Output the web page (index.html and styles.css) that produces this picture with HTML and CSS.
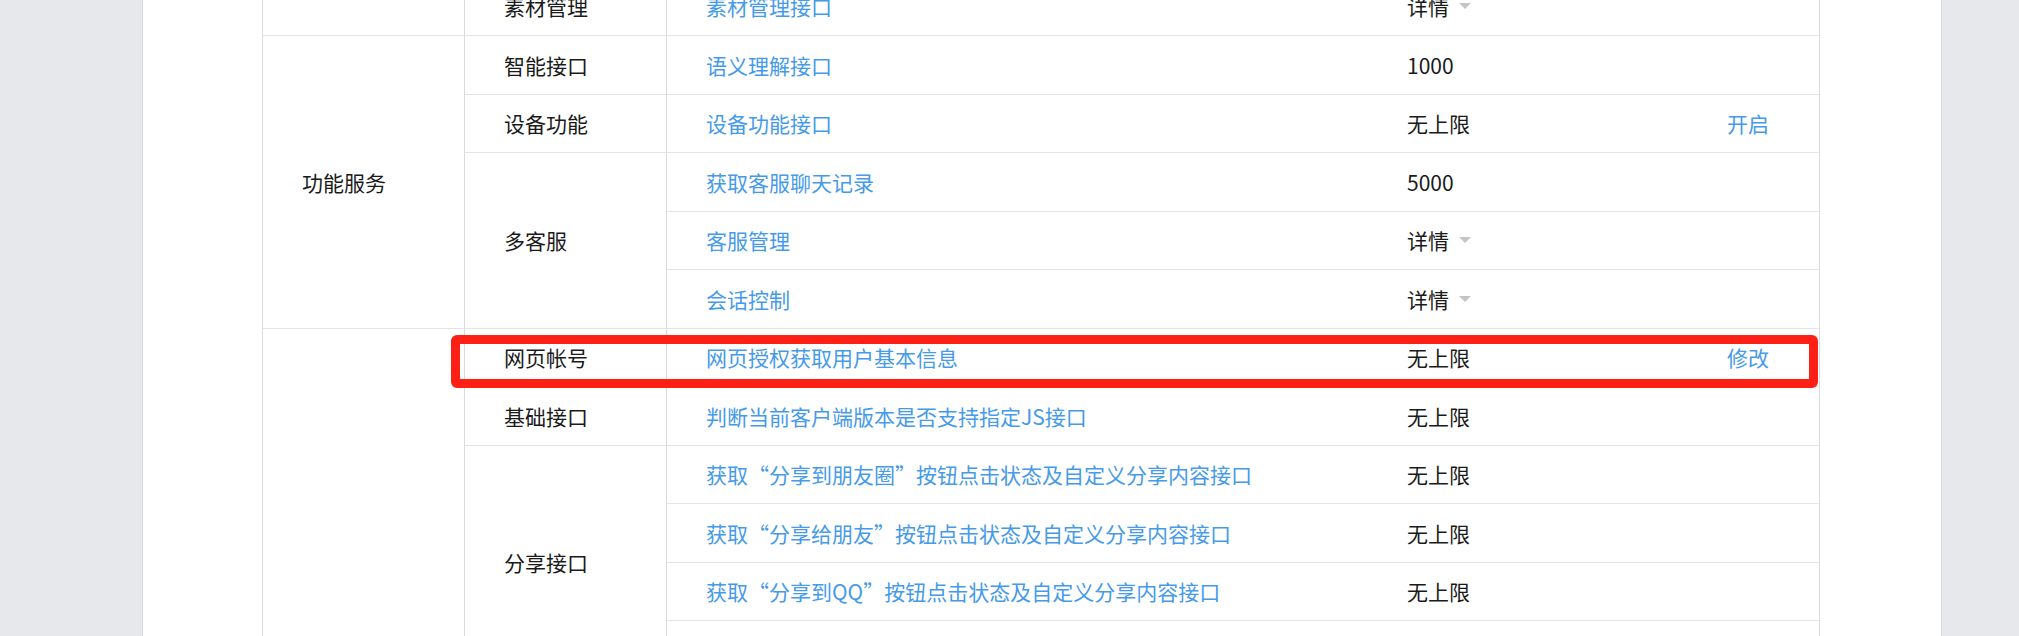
FILE: index.html
```html
<!DOCTYPE html>
<html lang="zh-CN">
<head>
<meta charset="utf-8">
<title>接口权限</title>
<link rel="stylesheet" href="styles.css">
</head>
<body>
<div class="page">
  <div class="grid">
    <!-- 素材管理 (section above, scrolled) -->
    <div class="cell c1"></div>
    <div class="cell c2">素材管理</div>
    <div class="cell c3 link">素材管理接口</div>
    <div class="cell c4">详情<span class="caret"></span></div>
    <div class="cell c5"></div>

    <!-- 功能服务 -->
    <div class="cell c1 span5">功能服务</div>
    <div class="cell c2">智能接口</div>
    <div class="cell c3 link">语义理解接口</div>
    <div class="cell c4">1000</div>
    <div class="cell c5"></div>

    <div class="cell c2">设备功能</div>
    <div class="cell c3 link">设备功能接口</div>
    <div class="cell c4">无上限</div>
    <div class="cell c5 link">开启</div>

    <div class="cell c2 span3">多客服</div>
    <div class="cell c3 link">获取客服聊天记录</div>
    <div class="cell c4">5000</div>
    <div class="cell c5"></div>

    <div class="cell c3 link">客服管理</div>
    <div class="cell c4">详情<span class="caret"></span></div>
    <div class="cell c5"></div>

    <div class="cell c3 link">会话控制</div>
    <div class="cell c4">详情<span class="caret"></span></div>
    <div class="cell c5"></div>

    <!-- 网页服务 -->
    <div class="cell c1 span17">网页服务</div>
    <div class="cell c2 anchor">网页帐号<span class="highlight"></span></div>
    <div class="cell c3 link">网页授权获取用户基本信息</div>
    <div class="cell c4">无上限</div>
    <div class="cell c5 link">修改</div>

    <div class="cell c2">基础接口</div>
    <div class="cell c3 link">判断当前客户端版本是否支持指定JS接口</div>
    <div class="cell c4">无上限</div>
    <div class="cell c5"></div>

    <div class="cell c2 span4">分享接口</div>
    <div class="cell c3 link">获取“分享到朋友圈”按钮点击状态及自定义分享内容接口</div>
    <div class="cell c4">无上限</div>
    <div class="cell c5"></div>
    <div class="cell c3 link">获取“分享给朋友”按钮点击状态及自定义分享内容接口</div>
    <div class="cell c4">无上限</div>
    <div class="cell c5"></div>
    <div class="cell c3 link">获取“分享到QQ”按钮点击状态及自定义分享内容接口</div>
    <div class="cell c4">无上限</div>
    <div class="cell c5"></div>
    <div class="cell c3 link">获取“分享到腾讯微博”按钮点击状态及自定义分享内容接口</div>
    <div class="cell c4">无上限</div>
    <div class="cell c5"></div>

    <div class="cell c2 span4">图像接口</div>
    <div class="cell c3 link">拍照或从手机相册中选图接口</div>
    <div class="cell c4">无上限</div>
    <div class="cell c5"></div>
    <div class="cell c3 link">预览图片接口</div>
    <div class="cell c4">无上限</div>
    <div class="cell c5"></div>
    <div class="cell c3 link">上传图片接口</div>
    <div class="cell c4">无上限</div>
    <div class="cell c5"></div>
    <div class="cell c3 link">下载图片接口</div>
    <div class="cell c4">无上限</div>
    <div class="cell c5"></div>

    <div class="cell c2 span7">音频接口</div>
    <div class="cell c3 link">开始录音接口</div>
    <div class="cell c4">无上限</div>
    <div class="cell c5"></div>
    <div class="cell c3 link">停止录音接口</div>
    <div class="cell c4">无上限</div>
    <div class="cell c5"></div>
    <div class="cell c3 link">播放语音接口</div>
    <div class="cell c4">无上限</div>
    <div class="cell c5"></div>
    <div class="cell c3 link">暂停播放接口</div>
    <div class="cell c4">无上限</div>
    <div class="cell c5"></div>
    <div class="cell c3 link">停止播放接口</div>
    <div class="cell c4">无上限</div>
    <div class="cell c5"></div>
    <div class="cell c3 link">上传语音接口</div>
    <div class="cell c4">无上限</div>
    <div class="cell c5"></div>
    <div class="cell c3 link">下载语音接口</div>
    <div class="cell c4">无上限</div>
    <div class="cell c5"></div>
  </div>
</div>
</body>
</html>
```
FILE: styles.css
```css
html, body {
  margin: 0;
  padding: 0;
}

body {
  background: #e7e8eb;
  font-family: "Noto Sans CJK SC", "Microsoft YaHei", sans-serif;
  font-size: 21px;
  color: #1a1a1a;
  overflow: hidden;
}

.page {
  margin-left: 142px;
  width: 1800px;
  box-sizing: border-box;
  min-height: 100vh;
  background: #ffffff;
  border-left: 1px solid #d9dadc;
  border-right: 1px solid #d9dadc;
  padding: 0 0 0 119px;
}

.grid {
  display: grid;
  width: 1557px;
  grid-template-columns: 202px 202px 701px 320px 132px;
  grid-auto-rows: 58.5px;
  border-right: 1px solid #dadada;
  margin-top: -22.5px;
}

.cell {
  box-sizing: border-box;
  display: flex;
  align-items: center;
  padding-left: 40px;
  border-bottom: 1px solid #e4e4e4;
  white-space: nowrap;
}

.c1, .c2, .c3 {
  border-left: 1px solid #dadada;
  padding-left: 39px;
}

.c1 { grid-column: 1; }
.c2 { grid-column: 2; }
.c3 { grid-column: 3; }
.c4 { grid-column: 4; }
.c5 { grid-column: 5; }

.span3 { grid-row: span 3; }
.span4 { grid-row: span 4; }
.span5 { grid-row: span 5; }
.span7 { grid-row: span 7; }
.span17 { grid-row: span 17; }

.link {
  color: #459ae9;
}

.caret {
  display: inline-block;
  width: 0;
  height: 0;
  margin-left: 10px;
  border-left: 6px solid transparent;
  border-right: 6px solid transparent;
  border-top: 6px solid #c4c4c4;
}

.anchor {
  position: relative;
}

.highlight {
  position: absolute;
  left: -14px;
  top: 6px;
  width: 1367px;
  height: 53px;
  box-sizing: border-box;
  border: 9px solid #ff2015;
  border-radius: 6px;
  pointer-events: none;
}
```
